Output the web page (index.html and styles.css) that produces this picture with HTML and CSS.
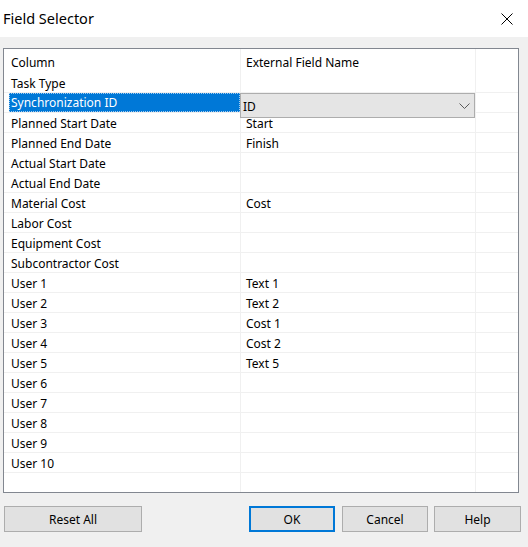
FILE: index.html
```html
<!DOCTYPE html>
<html>
<head>
<meta charset="utf-8">
<link rel="stylesheet" href="styles.css">
</head>
<body>
<div class="dialog">
  <div class="titlebar">
    <span class="title">Field Selector</span>
    <svg class="close" width="12" height="12" viewBox="0 0 12 12"><path d="M0.5 0.5 L11.5 11.5 M11.5 0.5 L0.5 11.5" stroke="#000" stroke-width="1" fill="none"/></svg>
  </div>
  <div class="content">
    <div class="grid">
      <div class="row head"><div class="c1"><span class="txt">Column</span></div><div class="c2"><span class="txt">External Field Name</span></div><div class="c3"></div></div>
      <div class="row"><div class="c1"><span class="txt">Task Type</span></div><div class="c2"></div><div class="c3"></div></div>
      <div class="row"><div class="c1"><span class="txt sel">Synchronization ID</span></div><div class="c2"><div class="combo"><span class="combo-val">ID</span><svg class="chev" width="11" height="6" viewBox="0 0 11 6"><path d="M0.5 0.5 L5.5 5.5 L10.5 0.5" stroke="#5a5a5a" stroke-width="1" fill="none"/></svg></div></div><div class="c3"></div></div>
      <div class="row"><div class="c1"><span class="txt">Planned Start Date</span></div><div class="c2"><span class="txt">Start</span></div><div class="c3"></div></div>
      <div class="row"><div class="c1"><span class="txt">Planned End Date</span></div><div class="c2"><span class="txt">Finish</span></div><div class="c3"></div></div>
      <div class="row"><div class="c1"><span class="txt">Actual Start Date</span></div><div class="c2"></div><div class="c3"></div></div>
      <div class="row"><div class="c1"><span class="txt">Actual End Date</span></div><div class="c2"></div><div class="c3"></div></div>
      <div class="row"><div class="c1"><span class="txt">Material Cost</span></div><div class="c2"><span class="txt">Cost</span></div><div class="c3"></div></div>
      <div class="row"><div class="c1"><span class="txt">Labor Cost</span></div><div class="c2"></div><div class="c3"></div></div>
      <div class="row"><div class="c1"><span class="txt">Equipment Cost</span></div><div class="c2"></div><div class="c3"></div></div>
      <div class="row"><div class="c1"><span class="txt">Subcontractor Cost</span></div><div class="c2"></div><div class="c3"></div></div>
      <div class="row"><div class="c1"><span class="txt">User 1</span></div><div class="c2"><span class="txt">Text 1</span></div><div class="c3"></div></div>
      <div class="row"><div class="c1"><span class="txt">User 2</span></div><div class="c2"><span class="txt">Text 2</span></div><div class="c3"></div></div>
      <div class="row"><div class="c1"><span class="txt">User 3</span></div><div class="c2"><span class="txt">Cost 1</span></div><div class="c3"></div></div>
      <div class="row"><div class="c1"><span class="txt">User 4</span></div><div class="c2"><span class="txt">Cost 2</span></div><div class="c3"></div></div>
      <div class="row"><div class="c1"><span class="txt">User 5</span></div><div class="c2"><span class="txt">Text 5</span></div><div class="c3"></div></div>
      <div class="row"><div class="c1"><span class="txt">User 6</span></div><div class="c2"></div><div class="c3"></div></div>
      <div class="row"><div class="c1"><span class="txt">User 7</span></div><div class="c2"></div><div class="c3"></div></div>
      <div class="row"><div class="c1"><span class="txt">User 8</span></div><div class="c2"></div><div class="c3"></div></div>
      <div class="row"><div class="c1"><span class="txt">User 9</span></div><div class="c2"></div><div class="c3"></div></div>
      <div class="row"><div class="c1"><span class="txt">User 10</span></div><div class="c2"></div><div class="c3"></div></div>
      <div class="row filler"><div class="c1"></div><div class="c2"></div><div class="c3"></div></div>
    </div>
    <div class="footer">
      <button class="btn reset">Reset All</button>
      <div class="group">
        <button class="btn ok">OK</button>
        <button class="btn cancel">Cancel</button>
        <button class="btn help">Help</button>
      </div>
    </div>
  </div>
</div>
</body>
</html>
```
FILE: styles.css
```css
* { box-sizing: border-box; }
html, body { margin: 0; padding: 0; }
body {
  width: 528px;
  height: 547px;
  background: #f0f0f0;
  font-family: "Noto Sans", "Open Sans", sans-serif;
  font-size: 12px;
  color: #000;
  overflow: hidden;
}
.titlebar {
  height: 37px;
  background: #fff;
  display: flex;
  align-items: center;
  justify-content: space-between;
  padding: 0 15px 2px 3px;
}
.title {
  font-size: 14.5px;
}
.close { display: block; margin-top: 2px; }
.content {
  padding: 11px 9px 0 3px;
}
.grid {
  border: 1px solid #828790;
  background: #fff;
  height: 445px;
  display: flex;
  flex-direction: column;
}
.row {
  display: flex;
  height: 20px;
  border-bottom: 1px solid #f0f0f0;
  flex: none;
}
.row.head {
  height: 24px;
  border-bottom: none;
}
.row.filler {
  flex: 1;
  border-bottom: none;
}
.c1, .c2, .c3 {
  height: 100%;
  display: flex;
  align-items: center;
}
.c1 {
  width: 237px;
  padding-left: 5px;
  border-right: 1px solid #f0f0f0;
}
.c2 {
  width: 235px;
  padding-left: 5px;
  border-right: 1px solid #f0f0f0;
  position: relative;
}
.c3 { flex: 1; }
.txt {
  white-space: nowrap;
  line-height: 19px;
  padding-top: 2px;
}
.c1 .txt { padding-left: 2px; }
.txt.sel {
  background: #0078d7;
  color: #fff;
  width: 231px;
  height: 19px;
  padding-top: 1px;
  line-height: 18px;
  outline: 1px dotted #a8cdee;
  outline-offset: -1px;
}
.combo {
  position: absolute;
  left: -1px;
  top: 0;
  width: 235px;
  height: 25px;
  background: #e5e5e5;
  border: 1px solid #adadad;
  display: flex;
  align-items: center;
  justify-content: space-between;
  padding: 0 4px 0 2px;
  z-index: 2;
}
.combo-val { font-size: 12px; line-height: 16px; padding-top: 2px; }
.chev { display: block; }
.footer {
  display: flex;
  justify-content: space-between;
  align-items: flex-start;
  margin-top: 13px;
  padding-left: 1px;
}
.group {
  display: flex;
  margin-right: -2px;
}
.btn {
  font-family: "Noto Sans", "Open Sans", sans-serif;
  font-size: 12px;
  color: #000;
  height: 26px;
  width: 86px;
  background: #e1e1e1;
  border: 1px solid #adadad;
  padding: 0;
  margin: 0;
}
.btn.reset { width: 138px; }
.btn.ok { border: 2px solid #0078d7; margin-right: 7px; }
.btn.cancel { margin-right: 6px; }
.btn.help { width: 87px; }
```
